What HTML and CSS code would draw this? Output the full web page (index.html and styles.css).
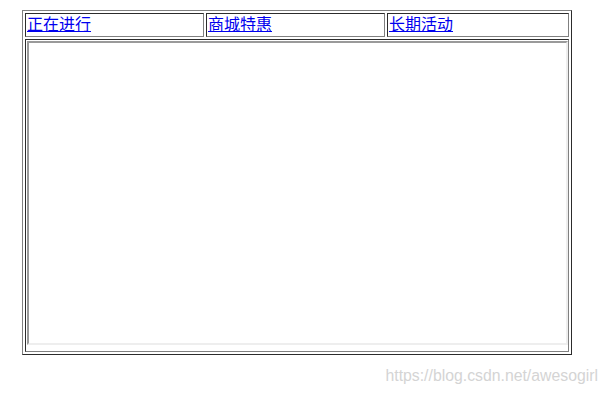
FILE: index.html
```html
<!DOCTYPE html>
<html lang="zh-CN">
<head>
<meta charset="utf-8">
<title>活动</title>
<link rel="stylesheet" href="styles.css">
</head>
<body>
<div class="page">
  <table class="tabs">
    <tr>
      <td class="tab"><a href="#" class="tab-link">正在进行</a></td>
      <td class="tab"><a href="#" class="tab-link">商城特惠</a></td>
      <td class="tab tab-last"><a href="#" class="tab-link">长期活动</a></td>
    </tr>
    <tr>
      <td class="content" colspan="3"><iframe class="frame" title="内容"></iframe></td>
    </tr>
  </table>
</div>
<div class="watermark">https://blog.csdn.net/awesogirl</div>
</body>
</html>
```

FILE: styles.css
```css
html, body {
  margin: 0;
  padding: 0;
  background: #ffffff;
}
.page {
  padding: 10px 0 0 22px;
  font-family: "Liberation Serif", serif;
  font-size: 16px;
}
.tabs {
  width: 550px;
  border: 1px outset gray;
  border-collapse: separate;
  border-spacing: 2px;
  table-layout: fixed;
}
.tab {
  width: 175px;
  border: 1px inset gray;
  padding: 0 1px 4px 1px;
  line-height: 18px;
  height: 18px;
  font-family: "Noto Sans CJK SC", sans-serif;
  font-size: 16px;
  vertical-align: top;
}
.tab-last {
  width: 178px;
}
.tab-link {
  color: #0000ee;
  text-decoration: underline;
}
.content {
  border: 1px inset gray;
  padding: 1px;
}
.frame {
  display: block;
  width: 537px;
  height: 300px;
  border: 2px inset;
  margin: 0 0 5px 0;
  background: #ffffff;
}
.watermark {
  position: absolute;
  right: 10px;
  top: 367px;
  font-family: "Liberation Sans", sans-serif;
  font-size: 15.8px;
  color: #d4d4d4;
}
```
